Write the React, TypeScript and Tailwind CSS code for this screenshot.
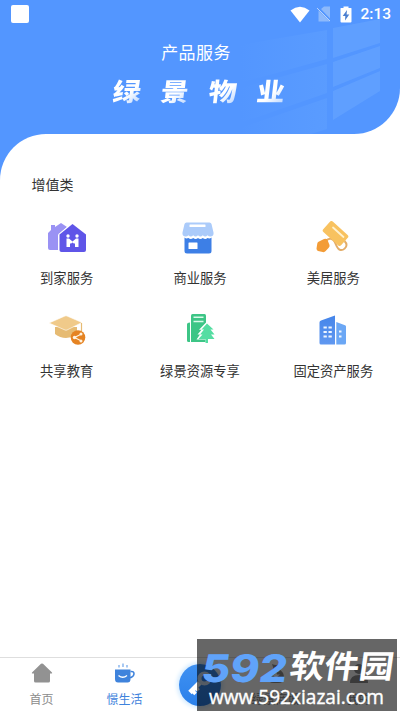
import type { ReactNode } from 'react'

const services: { name: string; icon: ReactNode }[] = [
  { name: '到家服务', icon: <HomeServiceIcon /> },
  { name: '商业服务', icon: <ShopIcon /> },
  { name: '美居服务', icon: <RollerIcon /> },
  { name: '共享教育', icon: <EducationIcon /> },
  { name: '绿景资源专享', icon: <ResourceIcon /> },
  { name: '固定资产服务', icon: <AssetIcon /> },
]

function HomeServiceIcon() {
  return (
    <svg width="40" height="34" viewBox="0 0 40 34">
      <path d="M1 12 4 9V4h4v2l6-4 6 4-9 8v15H3a2 2 0 0 1-2-2z" fill="#9a92f4" />
      <path d="M11.500 13 25.500 1.500 40 13V29a2 2 0 0 1-2 2H13.500a2 2 0 0 1-2-2z" fill="#fff" />
      <path d="M12.500 13.500 25.500 3 39 13.500V29a2 2 0 0 1-2 2H14.500a2 2 0 0 1-2-2z" fill="#5f55e8" />
      <g fill="#fff">
        <circle cx="21" cy="15" r="1.700" />
        <circle cx="30" cy="15" r="1.700" />
        <path d="M19.500 17.500h2.500l3.500 3 3.500-3h2.500V26H28v-3.500h-1.200l-1.300-1-1.300 1H23V26h-3.500z" />
      </g>
    </svg>
  )
}

function ShopIcon() {
  return (
    <svg className="-ml-[3px]" width="34" height="34" viewBox="0 0 34 34">
      <path d="M3.500 16.500v13.500a2.500 2.500 0 0 0 2.500 2.500h22a2.500 2.500 0 0 0 2.500-2.500V16.500q-1.700 1.500-4 .5-2.200 1.800-4.700 0-2.400 1.800-4.800 0-2.400 1.800-4.800 0-2.400 1.800-4.800 0-2.300 1-3.900-.5z" fill="#3d7fe6" />
      <path d="M5.500 1.500h23q1.500 0 2 1.500l2 8.500q.5 3.500-2.500 4-2 .3-3.500-1.200-2.200 2.400-4.700 0-2.400 2.400-4.800 0-2.400 2.400-4.800 0-2.400 2.400-4.800 0Q6 15.800 4 15.500q-3-.5-2.500-4L3.500 3q.5-1.500 2-1.500z" fill="#abcbfa" />
      <rect x="8.500" y="3.500" width="16" height="2.500" rx=".5" fill="#fff" />
      <rect x="7.500" y="21.500" width="9" height="6.500" rx=".5" fill="#fff" />
    </svg>
  )
}

function RollerIcon() {
  return (
    <svg width="34" height="34" viewBox="0 0 34 34">
      <path d="M10 20c3-4 7-2 8.500.5 2 3.500 2.500 8 6 8.500 3 .5 6-2.500 6-5 0-2-1-3-2-4" fill="none" stroke="#e3ad69" strokeWidth="2" />
      <rect x="-12" y="-7" width="24" height="14" rx="2" transform="translate(19.500 12.500) rotate(42)" fill="#f8c260" />
      <path d="m17 6.500 10.500 9.500" stroke="#fff1cf" strokeWidth="1.800" strokeLinecap="round" />
      <path d="M3 20.500 8 18q2.500-1 3.500 1l2 5q.4 1.500-.8 2.800l-3 3.200q-1.200 1.500-3 1L2 30q-1.500-.7-1.500-2.500L1.300 22.500Q1.500 21 3 20.500z" fill="#f39c37" />
    </svg>
  )
}

function EducationIcon() {
  return (
    <svg width="38" height="34" viewBox="0 0 38 34">
      <path d="M7 13h22v8q-5 3-11 3T7 20z" fill="#e6bb73" />
      <path d="M1 9 17 2q1-.4 2 0l15 6.500-15 7.500q-1 .5-2 0z" fill="#f0ca8a" stroke="#fff" strokeWidth=".6" />
      <path d="M33.500 9v10" stroke="#e6bb73" strokeWidth="1.200" />
      <circle cx="30" cy="23.500" r="7.300" fill="#e58322" />
      <path d="m33.500 20-7 3.500 7 3.500" fill="none" stroke="#fff2df" strokeWidth="1.200" />
      <circle cx="26.500" cy="23.500" r="1.700" fill="#fff2df" />
      <circle cx="33" cy="20" r="1.500" fill="#fff2df" />
      <circle cx="33" cy="27" r="1.500" fill="#fff2df" />
    </svg>
  )
}

function ResourceIcon() {
  return (
    <svg className="ml-[3px]" width="30" height="34" viewBox="0 0 30 34">
      <path d="M1 10.500Q1 8.700 4 8.500v19.500H2.500A1.500 1.500 0 0 1 1 26.500z" fill="#3dc586" />
      <path d="M5 1.500A1.500 1.500 0 0 1 6.500 0h12A1.500 1.500 0 0 1 20 1.500V28H5z" fill="#3dc586" />
      <path d="M7.500 3.300h10M7.500 7.500h10" stroke="#d9fae9" strokeWidth="1.500" />
      <path d="m21 7.500-8 8.300h2.500l-4 4.700h2.500l-3.500 5h9V29h3v-3.500h6.500l-3.500-5h2.500l-4-4.700h3.500z" fill="#fff" />
      <path d="m21 9.500 6.500 6h-3l4 5H25l3.500 4.500h-6.500v4h-2.500v-4h-7l4-4.500H14l4-5h-2.500z" fill="#55dda2" />
    </svg>
  )
}

function AssetIcon() {
  return (
    <svg width="30" height="34" viewBox="0 0 30 34">
      <defs>
        <linearGradient id="tower" x1="0" y1="0" x2="0" y2="1">
          <stop stopColor="#4585ea" />
          <stop offset="1" stopColor="#6098f0" />
        </linearGradient>
      </defs>
      <path d="M1.500 8.500Q1.500 7 3 6.500L17 1.500v29H3A1.500 1.500 0 0 1 1.500 29z" fill="url(#tower)" />
      <path d="m18.300 8 8.700 3.200q1 .4 1 1.300v16.500a1.500 1.500 0 0 1-1.500 1.500h-8.200z" fill="#6ba7f5" />
      <path d="M5.500 13.500h3.300m1.700 0h3.300M5.500 18h3.300m1.700 0h3.300M5.500 22.500h3.300m1.700 0h3.300M21 17.500h2.500M21 22.500h2.500" stroke="#eef5ff" strokeWidth="2" />
    </svg>
  )
}

function StatusBar() {
  return (
    <div className="flex h-7 items-center pl-[11px] pr-[9px] text-white">
      <div className="size-[18px] rounded-[2px] bg-white" />
      <svg className="ml-auto" width="20" height="17" viewBox="0 0 20 17">
        <path d="M.5 4.500Q10-2.800 19.500 4.500L10 16.500z" fill="#fff" />
      </svg>
      <svg className="ml-[6px]" width="15" height="16" viewBox="0 0 15 16">
        <path d="M2.500 4.500 14 15.500H2.500zM5 3l3-2.500h6v12z" fill="#8db9fb" />
        <path d="m1 2 13 13" stroke="#b6d2fd" strokeWidth="1" />
      </svg>
      <svg className="ml-[9px]" width="12" height="17" viewBox="0 0 12 17">
        <path d="M3.500 2V.5h5V2H11q.5 0 .5.500v13q0 1-1 1h-9q-1 0-1-1v-13Q.5 2 1 2z" fill="#fff" />
        <path d="M7 4 2.700 10h2.600L5 14.500l4.300-6H6.600z" fill="#4b7fd0" />
      </svg>
      <span className="ml-2 pt-[2px] font-['Roboto',sans-serif] text-[15.500px] leading-none font-medium">2:13</span>
    </div>
  )
}

function WindowLight() {
  return (
    <svg className="absolute inset-0" width="400" height="134" viewBox="0 0 400 134">
      <defs>
        <linearGradient id="pane" x1="240" x2="328" y1="0" y2="0" gradientUnits="userSpaceOnUse">
          <stop stopColor="#6aa9ff" stopOpacity="0" />
          <stop offset="1" stopColor="#6aa9ff" stopOpacity=".3" />
        </linearGradient>
      </defs>
      <path d="M240 45 327 30v29l-87 24zM240 88l87-24v29l-87 30zM240 128l87-30v31l-16 5h-71z" fill="url(#pane)" />
      <path d="m333 28 47-9v24l-47 15zM333 62l47-16v22l-47 19zM333 91l47-20v20l-47 29z" fill="#65a5ff" fillOpacity=".65" />
    </svg>
  )
}

function TabItem({ label, active, children }: { label: string; active?: boolean; children: ReactNode }) {
  return (
    <div className={`flex w-[83px] flex-col items-center pt-[5px] text-xs ${active ? 'text-[#3f83dc]' : 'text-[#8c8c8c]'}`}>
      <div className="h-[22px]">{children}</div>
      <span className="mt-[5px] leading-[18px]">{label}</span>
    </div>
  )
}

function TabBar() {
  return (
    <nav className="flex h-[55px] border-t border-[#dedede] bg-white">
      <TabItem label="首页">
        <svg width="22" height="22" viewBox="0 0 22 22">
          <path d="M10 .8q1-.8 2 0l9 8.700q.6.800-.4 1H19V18q0 1.500-1.500 1.500h-13Q3 19.500 3 18v-7.500H1.400Q.4 10.300 1 9.500z" fill="#929292" />
        </svg>
      </TabItem>
      <TabItem label="憬生活" active>
        <svg width="22" height="22" viewBox="0 0 22 22">
          <path d="M1 6.500h15.500V16q0 3.500-3 3.500H4q-3 0-3-3.500z" fill="#3f83dc" />
          <path d="M16.500 8.500h1q2.500 0 2.500 2.200T17 14.500h-1" fill="none" stroke="#3f83dc" strokeWidth="1.500" />
          <path d="M5 2v2.500M9 .5v3.500M13 2v2.500" stroke="#6ea5ea" strokeWidth="1.200" />
          <path d="M4.500 12.500q4.300 3.500 8.500 0" fill="none" stroke="#fff" strokeWidth="1.300" />
        </svg>
      </TabItem>
      <div className="flex w-[68px] justify-center pt-[6px]">
        <div className="flex size-[42px] items-center justify-center rounded-full bg-linear-to-b from-[#3f91f2] to-[#2a80ea] shadow-[0_0_4px_2px_#d3ebff]">
          <svg width="30" height="30" viewBox="0 0 30 30">
            <circle cx="19.500" cy="8.500" r="5" fill="none" stroke="#cfe4fb" strokeWidth="4" />
            <path d="M14.500 13 5 22.500" stroke="#fff" strokeWidth="5" />
            <path d="M7.500 20.500 10.500 24M10.500 17l3 3.500" stroke="#fff" strokeWidth="3.500" />
          </svg>
        </div>
      </div>
      <TabItem label="绿景商城">
        <svg width="22" height="22" viewBox="0 0 22 22">
          <path d="M7 1q4 2 8 0l-1.500 4.500Q19 9 19 14.500 19 20 13 20H9q-6 0-6-5.500Q3 9 8.500 5.500z" fill="#929292" />
          <path d="m11 8.500 1 3h3l-2.500 2 1 3-2.500-2-2.500 2 1-3-2.500-2h3z" fill="#fff" />
        </svg>
      </TabItem>
      <TabItem label="我的">
        <svg width="22" height="22" viewBox="0 0 22 22">
          <circle cx="11" cy="6" r="5" fill="#929292" />
          <path d="M2 20q0-8 9-8t9 8z" fill="#929292" />
        </svg>
      </TabItem>
    </nav>
  )
}

function Watermark() {
  return (
    <div className="absolute top-[639px] left-[197px] h-[72px] w-[200px] bg-black/60">
      <svg width="200" height="72" viewBox="0 0 200 72" fontFamily="'Noto Sans CJK SC', sans-serif">
        <g transform="skewX(-8)">
          <text x="9" y="43" fontFamily="Inter, sans-serif" fontSize="38" fontWeight="800" fill="#60a3fa" textLength="86" lengthAdjust="spacingAndGlyphs">592</text>
          <text x="97" y="39.500" fontSize="32" fontWeight="700" fill="#fff" textLength="104" lengthAdjust="spacingAndGlyphs">软件园</text>
        </g>
        <text x="12" y="65" fontFamily="'Open Sans', sans-serif" fontSize="20" fill="#fff" stroke="#fff" strokeWidth=".4" textLength="175" lengthAdjust="spacingAndGlyphs">www.592xiazai.com</text>
      </svg>
    </div>
  )
}

export default function App() {
  return (
    <div className="relative flex h-[712px] w-[400px] flex-col overflow-hidden bg-white font-['Noto_Sans_CJK_SC',sans-serif]">
      {/* Header */}
      <header className="relative h-[134px] shrink-0 overflow-hidden rounded-br-[46px] bg-[#5396ff]">
        <WindowLight />
        <div className="relative">
          <StatusBar />
          <p className="mt-3 pr-2 text-center text-[17px] leading-6 tracking-[0.4px] text-white">产品服务</p>
          <h1 className="mt-[11px] flex scale-y-90 -skew-x-6 justify-center gap-5 pr-[2px] text-[28px] leading-[30px] font-black">
            {['绿', '景', '物', '业'].map((char) => (
              <span key={char} className="bg-linear-to-br from-white from-60% to-[#b9d5ff] bg-clip-text text-transparent">{char}</span>
            ))}
          </h1>
        </div>
      </header>

      {/* Services */}
      <div className="flex-1 bg-[linear-gradient(to_right,#5396ff_50px,#fff_50px)]">
        <main className="h-full rounded-tl-[46px] bg-white pt-[39px]">
          <h2 className="pl-[31.500px] text-sm leading-[22px] text-[#333]">增值类</h2>
          <div className="mt-6 grid grid-cols-3">
            {services.map((service) => (
              <div key={service.name} className="flex h-[93px] flex-col items-center">
                <div className="flex h-[37px] items-center">{service.icon}</div>
                <span className="mt-3 text-[13.300px] leading-5 text-[#333]">{service.name}</span>
              </div>
            ))}
          </div>
        </main>
      </div>

      <TabBar />
      <Watermark />
    </div>
  )
}
